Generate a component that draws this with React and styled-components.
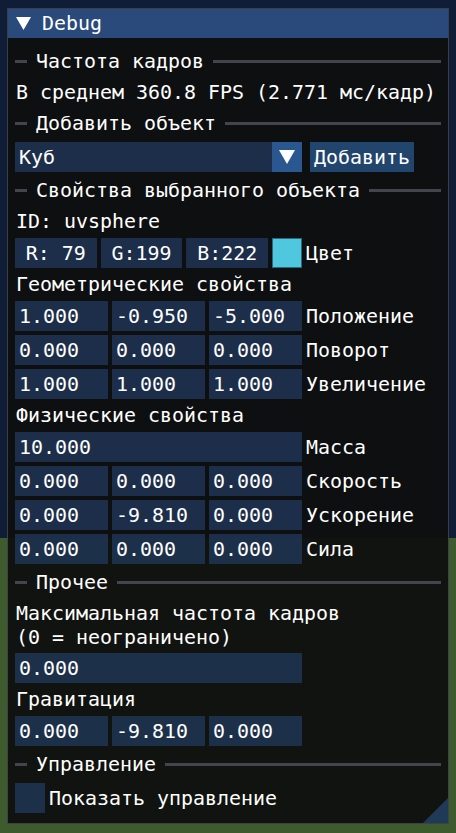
import React from "react";
import styled, { createGlobalStyle } from "styled-components";

const GlobalStyle = createGlobalStyle`
  html, body { margin: 0; padding: 0; }
  body {
    width: 456px;
    height: 833px;
    overflow: hidden;
    background: linear-gradient(#0f1e36 0, #0f1e36 538px, #3d5b2c 538px, #3d5b2c 100%);
    font-family: "DejaVu Sans Mono", "Liberation Mono", monospace;
    font-size: 19.95px;
    color: #ffffff;
  }
`;

const Window = styled.div`
  position: relative;
  box-sizing: border-box;
  margin: 8px 0 0 7px;
  width: 442px;
  height: 816px;
  border: 1px solid rgba(110, 110, 128, 0.5);
  background: rgba(15, 15, 15, 0.94);
  display: flex;
  flex-direction: column;
  overflow: hidden;
`;

const TitleBar = styled.div`
  height: 29px;
  background: #294a7a;
  display: flex;
  align-items: center;
  padding-left: 8px;
  gap: 11px;
  line-height: 25px;
`;

const Content = styled.div`
  display: flex;
  flex-direction: column;
  gap: 4px;
  padding: 9px 7px 0 7px;
`;

const SepWrap = styled.div`
  display: flex;
  align-items: center;
  gap: 9px;
  padding: 2px 0;
  height: 25px;
  line-height: 25px;
  white-space: pre;
`;

const SepLine = styled.div`
  height: 3px;
  background: #44444f;
  flex: ${(p) => (p.$grow ? "1" : "0 0 12px")};
`;

const Text = styled.div`
  line-height: ${(p) => p.$lh || 25}px;
  white-space: pre;
  padding-left: 1px;
`;

const Row = styled.div`
  display: flex;
  align-items: center;
  gap: ${(p) => p.$gap || 4}px;
`;

const Fields = styled.div`
  display: grid;
  width: 287px;
  grid-template-columns: ${(p) => p.$cols};
  gap: 4px;
`;

const Frame = styled.div`
  height: 30px;
  line-height: 30px;
  background: rgba(41, 74, 122, 0.54);
  padding: 0 4px;
  white-space: pre;
  text-align: ${(p) => (p.$center ? "center" : "left")};
  overflow: hidden;
`;

const Swatch = styled.div`
  box-sizing: border-box;
  width: 30px;
  height: 30px;
  background: rgb(79, 199, 222);
  border: 1px solid rgba(20, 40, 60, 0.6);
`;

const Label = styled.div`
  line-height: 30px;
  white-space: pre;
`;

const Combo = styled.div`
  width: 287px;
  height: 30px;
  display: flex;
  background: rgba(41, 74, 122, 0.54);
`;

const ComboValue = styled.div`
  flex: 1;
  line-height: 30px;
  padding-left: 4px;
`;

const ArrowBox = styled.div`
  width: 30px;
  height: 30px;
  background: rgba(66, 150, 250, 0.4);
  display: flex;
  align-items: center;
  justify-content: center;
`;

const Button = styled.div`
  height: 30px;
  line-height: 30px;
  padding: 0 4px;
  background: rgba(66, 150, 250, 0.4);
  white-space: pre;
`;

const Checkbox = styled.div`
  width: 30px;
  height: 30px;
  background: rgba(41, 74, 122, 0.54);
`;

const Grip = styled.div`
  position: absolute;
  right: 0;
  bottom: 0;
  width: 25px;
  height: 25px;
  background: rgba(66, 150, 250, 0.3);
  clip-path: polygon(100% 0, 100% 100%, 0 100%);
`;

const Tri = ({ w = 15, h = 13 }) => (
  <svg width={w} height={h} viewBox={`0 0 ${w} ${h}`}>
    <polygon points={`0,0 ${w},0 ${w / 2},${h}`} fill="#ffffff" />
  </svg>
);

const Sep = ({ children }) => (
  <SepWrap>
    <SepLine />
    <span>{children}</span>
    <SepLine $grow />
  </SepWrap>
);

const Vec3 = ({ values, label }) => (
  <Row>
    <Fields $cols="1fr 1fr 1fr">
      {values.map((v, i) => (
        <Frame key={i}>{v}</Frame>
      ))}
    </Fields>
    {label && <Label>{label}</Label>}
  </Row>
);

export default function App() {
  return (
    <>
      <GlobalStyle />
      <Window>
        <TitleBar>
          <Tri w={15} h={13} />
          <span>Debug</span>
        </TitleBar>
        <Content>
          <Sep>Частота кадров</Sep>
          <Text>В среднем 360.8 FPS (2.771 мс/кадр)</Text>
          <Sep>Добавить объект</Sep>
          <Row $gap={8}>
            <Combo>
              <ComboValue>Куб</ComboValue>
              <ArrowBox>
                <Tri w={16} h={14} />
              </ArrowBox>
            </Combo>
            <Button>Добавить</Button>
          </Row>
          <Sep>Свойства выбранного объекта</Sep>
          <Text>ID: uvsphere</Text>
          <Row>
            <Fields $cols="1fr 1fr 1fr 30px">
              <Frame $center>R: 79</Frame>
              <Frame $center>G:199</Frame>
              <Frame $center>B:222</Frame>
              <Swatch />
            </Fields>
            <Label>Цвет</Label>
          </Row>
          <Text>Геометрические свойства</Text>
          <Vec3 values={["1.000", "-0.950", "-5.000"]} label="Положение" />
          <Vec3 values={["0.000", "0.000", "0.000"]} label="Поворот" />
          <Vec3 values={["1.000", "1.000", "1.000"]} label="Увеличение" />
          <Text>Физические свойства</Text>
          <Row>
            <Fields $cols="1fr">
              <Frame>10.000</Frame>
            </Fields>
            <Label>Масса</Label>
          </Row>
          <Vec3 values={["0.000", "0.000", "0.000"]} label="Скорость" />
          <Vec3 values={["0.000", "-9.810", "0.000"]} label="Ускорение" />
          <Vec3 values={["0.000", "0.000", "0.000"]} label="Сила" />
          <Sep>Прочее</Sep>
          <Text $lh={24}>{"Максимальная частота кадров\n(0 = неограничено)"}</Text>
          <Row>
            <Fields $cols="1fr">
              <Frame>0.000</Frame>
            </Fields>
          </Row>
          <Text>Гравитация</Text>
          <Vec3 values={["0.000", "-9.810", "0.000"]} />
          <Sep>Управление</Sep>
          <Row>
            <Checkbox />
            <Label>Показать управление</Label>
          </Row>
        </Content>
        <Grip />
      </Window>
    </>
  );
}
